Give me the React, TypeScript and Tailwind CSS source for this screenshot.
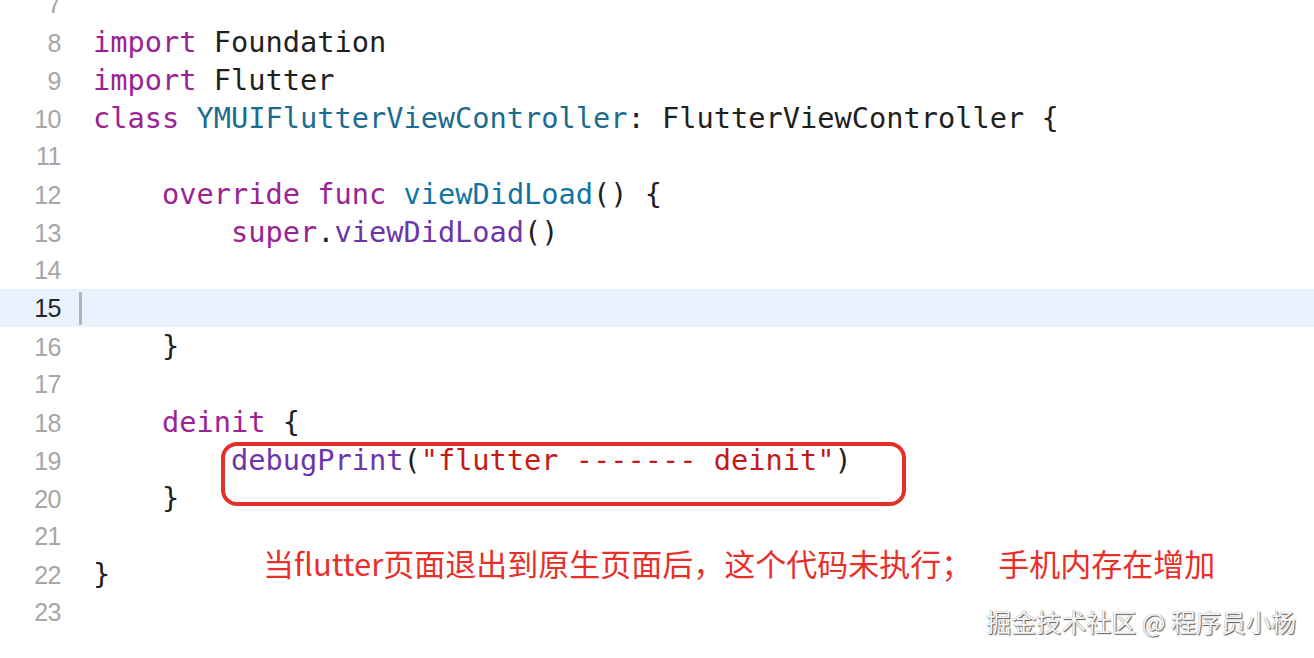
import React from "react";

type Tok = { t: string; c?: string };

const KW = "text-[#9b2393]";
const DECL = "text-[#1c6b92]";
const DECLF = "text-[#1273a6]";
const CALL = "text-[#6c36a9]";
const STR = "text-[#c41a16]";

const lines: { n: number; toks: Tok[]; current?: boolean }[] = [
  { n: 7, toks: [] },
  { n: 8, toks: [{ t: "import", c: KW }, { t: " Foundation" }] },
  { n: 9, toks: [{ t: "import", c: KW }, { t: " Flutter" }] },
  {
    n: 10,
    toks: [
      { t: "class", c: KW },
      { t: " " },
      { t: "YMUIFlutterViewController", c: DECL },
      { t: ": FlutterViewController {" },
    ],
  },
  { n: 11, toks: [] },
  {
    n: 12,
    toks: [
      { t: "    " },
      { t: "override", c: KW },
      { t: " " },
      { t: "func", c: KW },
      { t: " " },
      { t: "viewDidLoad", c: DECLF },
      { t: "() {" },
    ],
  },
  {
    n: 13,
    toks: [
      { t: "        " },
      { t: "super", c: KW },
      { t: "." },
      { t: "viewDidLoad", c: CALL },
      { t: "()" },
    ],
  },
  { n: 14, toks: [] },
  { n: 15, toks: [], current: true },
  { n: 16, toks: [{ t: "    }" }] },
  { n: 17, toks: [] },
  { n: 18, toks: [{ t: "    " }, { t: "deinit", c: KW }, { t: " {" }] },
  {
    n: 19,
    toks: [
      { t: "        " },
      { t: "debugPrint", c: CALL },
      { t: "(" },
      { t: '"flutter ------- deinit"', c: STR },
      { t: ")" },
    ],
  },
  { n: 20, toks: [{ t: "    }" }] },
  { n: 21, toks: [] },
  { n: 22, toks: [{ t: "}" }] },
  { n: 23, toks: [] },
];

export default function App() {
  return (
    <div className="relative w-[1314px] h-[658px] overflow-hidden bg-white">
      <div className="-mt-[15px] flex flex-col">
        {lines.map((l) => (
          <div
            key={l.n}
            className={`flex items-baseline h-[38px] leading-[38px] ${
              l.current ? "bg-[#e8f2fe]" : ""
            }`}
          >
            <div
              className={`w-[61px] shrink-0 text-right text-[25px] tracking-[-0.5px] font-['Liberation_Sans',sans-serif] ${
                l.current ? "text-[#262626]" : "text-[#a6a6a6]"
              }`}
            >
              {l.n}
            </div>
            <div className="w-[32px] shrink-0 self-stretch flex items-center pl-[18px]">
              {l.current && <div className="w-[3px] h-[33px] bg-[#b3b3b3] rounded-[1px]" />}
            </div>
            <div className="whitespace-pre text-[28.65px] font-['DejaVu_Sans_Mono',monospace] text-[#1f1f1f]">
              {l.toks.map((tk, i) => (
                <span key={i} className={tk.c}>
                  {tk.t}
                </span>
              ))}
            </div>
          </div>
        ))}
      </div>

      {/* red highlight box */}
      <div className="absolute left-[221px] top-[442px] w-[685px] h-[64px] border-[4px] border-[#e5302a] rounded-[16px]" />

      {/* annotation */}
      <div className="absolute left-[263px] top-[547px] whitespace-pre text-[31px] leading-none text-[#e8302a] font-['Noto_Sans_CJK_SC','Noto_Sans',sans-serif]">
        当flutter页面退出到原生页面后，这个代码未执行；<span className="ml-[26px]">手机内存在增加</span>
      </div>

      {/* watermark */}
      <div className="absolute right-[18px] top-[609px] whitespace-pre text-[25px] leading-none text-[#f6f6f6] font-['Noto_Sans_CJK_SC','Noto_Sans',sans-serif] [text-shadow:1px_1px_1px_#5a5a5a,0_0_1px_#8a8a8a]">
        掘金技术社区 @ 程序员小杨
      </div>
    </div>
  );
}
